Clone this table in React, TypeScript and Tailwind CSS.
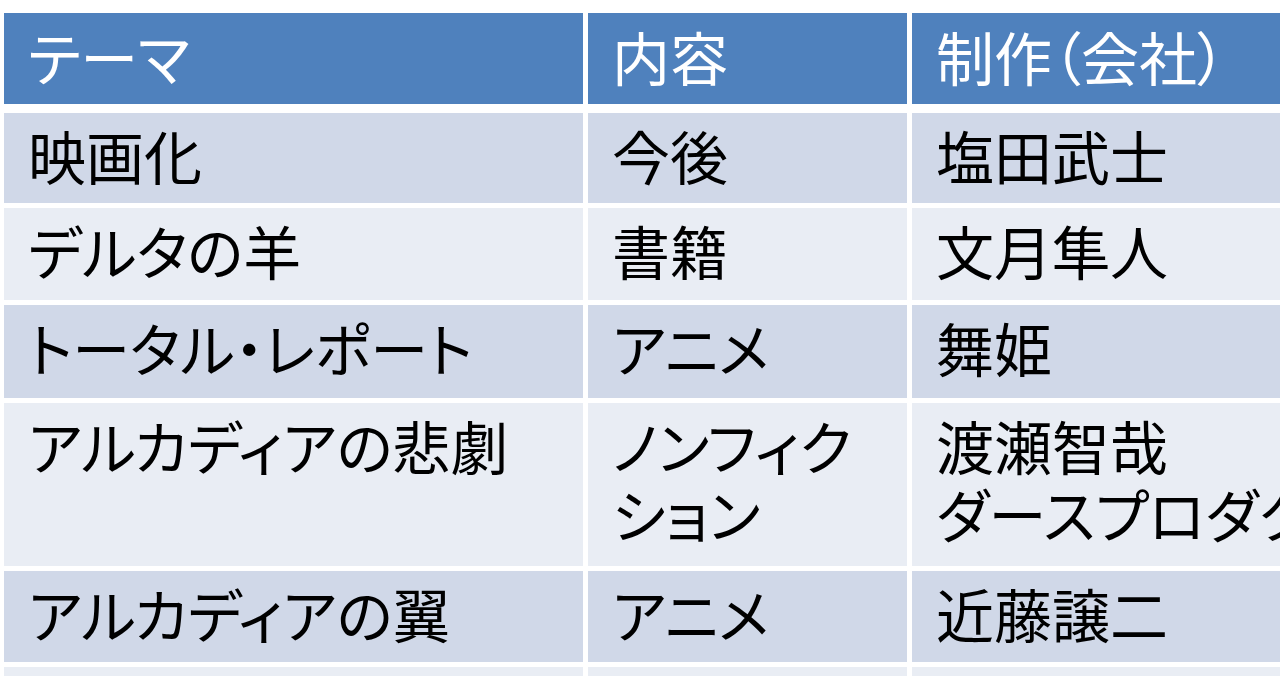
const header = ["テーマ", "内容", "制作（会社）"];

const rows: { cells: string[][]; h: string; bg: string }[] = [
  { cells: [["映画化"], ["今後"], ["塩田武士"]], h: "h-[90px]", bg: "bg-[#d0d8e8]" },
  { cells: [["デルタの羊"], ["書籍"], ["文月隼人"]], h: "h-[92px]", bg: "bg-[#e9edf4]" },
  { cells: [["トータル・レポート"], ["アニメ"], ["舞姫"]], h: "h-[93px]", bg: "bg-[#d0d8e8]" },
  {
    cells: [["アルカディアの悲劇"], ["ノンフィク", "ション"], ["渡瀬智哉", "ダースプロダクション"]],
    h: "h-[163px]",
    bg: "bg-[#e9edf4]",
  },
  { cells: [["アルカディアの翼"], ["アニメ"], ["近藤譲二"]], h: "h-[91px]", bg: "bg-[#d0d8e8]" },
  { cells: [[""], [""], [""]], h: "h-[91px]", bg: "bg-[#e9edf4]" },
];

const widths = ["w-[579px]", "w-[319px]", "w-[420px]"];

export default function App() {
  return (
    <div
      className="w-[1280px] h-[676px] overflow-hidden bg-white text-black [font-feature-settings:'palt']"
      style={{ fontFamily: '"Noto Sans CJK JP", "Noto Sans", sans-serif' }}
    >
      <div className="pt-[13px] pl-[4px] flex flex-col w-[1340px]">
        <div className="flex gap-[5px] h-[91px] mb-[9px]">
          {header.map((t, i) => (
            <div
              key={i}
              className={`${widths[i]} shrink-0 bg-[#4f81bd] text-white text-[58px] leading-[68px] pl-[24px] pt-[9px] whitespace-nowrap`}
            >
              {t}
            </div>
          ))}
        </div>
        <div className="flex flex-col gap-[5px]">
          {rows.map((r, ri) => (
            <div key={ri} className={`flex gap-[5px] ${r.h}`}>
              {r.cells.map((lines, ci) => (
                <div
                  key={ci}
                  className={`${widths[ci]} shrink-0 ${r.bg} text-[58px] leading-[68px] pl-[24px] pt-[8px] whitespace-nowrap`}
                >
                  {lines.map((l, li) => (
                    <div key={li}>{l}</div>
                  ))}
                </div>
              ))}
            </div>
          ))}
        </div>
      </div>
    </div>
  );
}
